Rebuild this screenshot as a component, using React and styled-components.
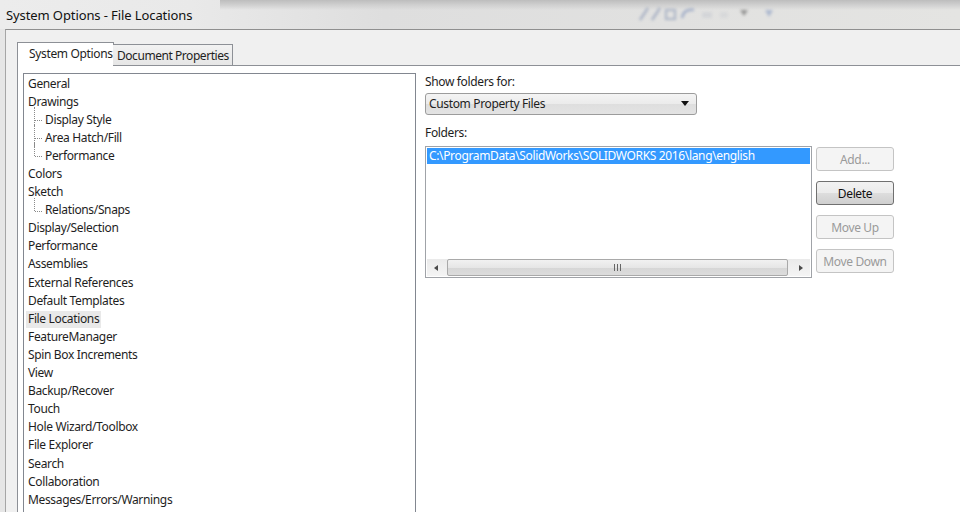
import React from "react";
import styled, { createGlobalStyle, css } from "styled-components";

const Global = createGlobalStyle`
  html, body { margin: 0; padding: 0; }
  body {
    width: 960px; height: 512px; overflow: hidden;
    background: #e6e6e6;
    font-family: "Noto Sans", "Segoe UI", sans-serif;
    font-size: 12px;
    letter-spacing: -0.35px;
    color: #1e1e1e;
  }
  #root { height: 512px; }
`;

const Screen = styled.div`
  display: flex;
  flex-direction: column;
  width: 960px;
  height: 512px;
  overflow: hidden;
`;

const TitleBar = styled.div`
  position: relative;
  height: 29px;
  flex: none;
  display: flex;
  align-items: center;
  padding-left: 6px;
  background: linear-gradient(90deg, #ececec 0%, #e9e9e9 20%, #dedede 40%, #e4e4e2 100%);
  overflow: hidden;
`;

const TitleShade = styled.div`
  position: absolute;
  left: 220px;
  right: 0;
  top: 0;
  height: 10px;
  background: linear-gradient(180deg, #bdbdbd 0%, #d0d0d0 50%, rgba(222,222,222,0) 100%);
`;

const TitleText = styled.span`
  position: relative;
  font-size: 13px;
  color: #111;
  letter-spacing: -0.1px;
`;

const BlurIcons = styled.svg`
  position: absolute;
  left: 632px;
  top: 4px;
  filter: blur(1.6px);
  opacity: 0.55;
`;

const Frame = styled.div`
  flex: 1;
  display: flex;
  flex-direction: column;
  margin-left: 5px;
  border-left: 1px solid #a6a6a6;
  border-top: 1px solid #8f8f8f;
  background: #f0f0f0;
  padding-left: 11px;
  min-height: 0;
`;

const TabStrip = styled.div`
  height: 35px;
  flex: none;
  display: flex;
  align-items: flex-end;
  position: relative;
  z-index: 1;
`;

const Tab = styled.div`
  box-sizing: border-box;
  display: flex;
  align-items: center;
  white-space: nowrap;
  border: 1px solid #8d9096;
  border-bottom: none;
  font-size: 12px;
  ${(p) =>
    p.$active
      ? css`
          width: 97px;
          height: 24px;
          padding: 0 0 2px 11px;
          background: #ffffff;
          margin-bottom: -1px;
        `
      : css`
          height: 21px;
          width: 120px;
          padding: 1px 0 0 4px;
          margin-left: -1px;
          border-left: none;
          letter-spacing: -0.45px;
          background: linear-gradient(180deg, #f2f2f2 0%, #e6e6e6 100%);
        `}
`;

const TabPanel = styled.div`
  flex: 1;
  display: flex;
  align-items: flex-start;
  background: #ffffff;
  border-top: 1px solid #8d9096;
  border-left: 1px solid #8d9096;
  padding: 7px 0 0 5px;
  min-height: 0;
`;

const TreeBox = styled.div`
  box-sizing: border-box;
  width: 393px;
  height: 460px;
  flex: none;
  border: 1px solid #828790;
  padding: 1px 0 0 2px;
  background: #fff;
`;

const Row = styled.div`
  position: relative;
  height: 18.1px;
  display: flex;
  align-items: center;
  padding-left: ${(p) => (p.$child ? "17px" : "0")};

  ${(p) =>
    p.$child &&
    css`
      &::before {
        content: "";
        position: absolute;
        left: 8px;
        top: -4px;
        height: ${p.$last ? "13px" : "22px"};
        border-left: 1px dotted #8a8a8a;
      }
      &::after {
        content: "";
        position: absolute;
        left: 9px;
        top: 9px;
        width: 7px;
        border-top: 1px dotted #8a8a8a;
      }
    `}
`;

const Label = styled.span`
  padding: 1px 2px 2px 2px;
  line-height: 14px;
  white-space: nowrap;
  background: ${(p) => (p.$selected ? "#e9e9e9" : "transparent")};
`;

const RightPane = styled.div`
  display: flex;
  flex-direction: column;
  margin-left: 9px;
  padding-top: 1px;
`;

const FieldLabel = styled.div`
  line-height: 15px;
  height: 15px;
  margin-bottom: ${(p) => p.$mb || "4px"};
`;

const Select = styled.div`
  box-sizing: border-box;
  width: 272px;
  height: 22px;
  display: flex;
  align-items: center;
  justify-content: space-between;
  padding: 0 7px 1px 3px;
  border: 1px solid #9c9c9c;
  border-radius: 3px;
  background: linear-gradient(180deg, #f4f4f4 0%, #ebebeb 50%, #dedede 51%, #e3e3e3 100%);
  margin-bottom: 10px;
`;

const Caret = styled.span`
  width: 0;
  height: 0;
  border-left: 4px solid transparent;
  border-right: 4px solid transparent;
  border-top: 5px solid #111;
`;

const FolderRow = styled.div`
  display: flex;
  align-items: flex-start;
  gap: 4px;
`;

const ListBox = styled.div`
  box-sizing: border-box;
  width: 387px;
  height: 132px;
  border: 1px solid #a0a3a8;
  padding: 1px;
  display: flex;
  flex-direction: column;
  justify-content: space-between;
  background: #fff;
`;

const ListItem = styled.div`
  height: 16px;
  line-height: 15px;
  padding-left: 2px;
  background: #3399ff;
  color: #fff;
  white-space: nowrap;
`;

const HScroll = styled.div`
  height: 17px;
  display: flex;
  align-items: stretch;
  background: linear-gradient(180deg, #eaeaea 0%, #f4f4f4 100%);
`;

const ArrowBtn = styled.div`
  width: 18px;
  display: flex;
  align-items: center;
  justify-content: center;
  &::after {
    content: "";
    border-top: 3.5px solid transparent;
    border-bottom: 3.5px solid transparent;
    ${(p) =>
      p.$dir === "left"
        ? "border-right: 4px solid #4a4a4a;"
        : "border-left: 4px solid #4a4a4a;"}
  }
`;

const Thumb = styled.div`
  box-sizing: border-box;
  flex: 1;
  margin: 0 4px 0 2px;
  border: 1px solid #a9a9a9;
  border-radius: 2px;
  background: linear-gradient(180deg, #f1f1f1 0%, #e6e6e6 50%, #d6d6d6 51%, #dcdcdc 100%);
  display: flex;
  align-items: center;
  justify-content: center;
  gap: 2px;
`;

const Grip = styled.span`
  width: 1px;
  height: 7px;
  background: #666;
`;

const ButtonCol = styled.div`
  display: flex;
  flex-direction: column;
  gap: 10px;
  padding-top: 1px;
`;

const Button = styled.div`
  box-sizing: border-box;
  width: 78px;
  height: 24px;
  display: flex;
  align-items: center;
  justify-content: center;
  border-radius: 3px;
  ${(p) =>
    p.$disabled
      ? css`
          border: 1px solid #c4c4c4;
          background: #f4f4f4;
          color: #9a9a9a;
        `
      : css`
          border: 1px solid #707070;
          background: linear-gradient(180deg, #f2f2f2 0%, #ebebeb 50%, #dddddd 51%, #cfcfcf 100%);
          color: #111;
        `}
`;

const tree = [
  { t: "General" },
  { t: "Drawings" },
  { t: "Display Style", c: true },
  { t: "Area Hatch/Fill", c: true },
  { t: "Performance", c: true, last: true },
  { t: "Colors" },
  { t: "Sketch" },
  { t: "Relations/Snaps", c: true, last: true },
  { t: "Display/Selection" },
  { t: "Performance" },
  { t: "Assemblies" },
  { t: "External References" },
  { t: "Default Templates" },
  { t: "File Locations", sel: true },
  { t: "FeatureManager" },
  { t: "Spin Box Increments" },
  { t: "View" },
  { t: "Backup/Recover" },
  { t: "Touch" },
  { t: "Hole Wizard/Toolbox" },
  { t: "File Explorer" },
  { t: "Search" },
  { t: "Collaboration" },
  { t: "Messages/Errors/Warnings" },
];

export default function App() {
  return (
    <>
      <Global />
      <Screen>
        <TitleBar>
          <TitleShade />
          <TitleText>System Options - File Locations</TitleText>
          <BlurIcons width="220" height="20" viewBox="0 0 220 20">
            <path d="M8 16 L16 4 M20 16 L28 4" stroke="#7f8fb0" strokeWidth="2.5" fill="none" />
            <rect x="34" y="6" width="9" height="9" fill="none" stroke="#7f8fb0" strokeWidth="2" />
            <path d="M50 14 Q52 4 62 6" stroke="#6f85b5" strokeWidth="2.5" fill="none" />
            <rect x="70" y="8" width="10" height="6" fill="#c8cbd2" />
            <rect x="88" y="8" width="8" height="6" fill="#d0d2d6" />
            <path d="M108 6 L116 6 L112 12 Z" fill="#555" />
            <path d="M133 6 L141 6 L137 13 Z" fill="#7f95c0" />
          </BlurIcons>
        </TitleBar>
        <Frame>
          <TabStrip>
            <Tab $active>System Options</Tab>
            <Tab>Document Properties</Tab>
          </TabStrip>
          <TabPanel>
            <TreeBox>
              {tree.map((it, i) => (
                <Row key={i} $child={it.c} $last={it.last}>
                  <Label $selected={it.sel}>{it.t}</Label>
                </Row>
              ))}
            </TreeBox>
            <RightPane>
              <FieldLabel>Show folders for:</FieldLabel>
              <Select>
                <span>Custom Property Files</span>
                <Caret />
              </Select>
              <FieldLabel $mb="6px">Folders:</FieldLabel>
              <FolderRow>
                <ListBox>
                  <ListItem>C:\ProgramData\SolidWorks\SOLIDWORKS 2016\lang\english</ListItem>
                  <HScroll>
                    <ArrowBtn $dir="left" />
                    <Thumb>
                      <Grip />
                      <Grip />
                      <Grip />
                    </Thumb>
                    <ArrowBtn $dir="right" />
                  </HScroll>
                </ListBox>
                <ButtonCol>
                  <Button $disabled>Add...</Button>
                  <Button>Delete</Button>
                  <Button $disabled>Move Up</Button>
                  <Button $disabled>Move Down</Button>
                </ButtonCol>
              </FolderRow>
            </RightPane>
          </TabPanel>
        </Frame>
      </Screen>
    </>
  );
}
